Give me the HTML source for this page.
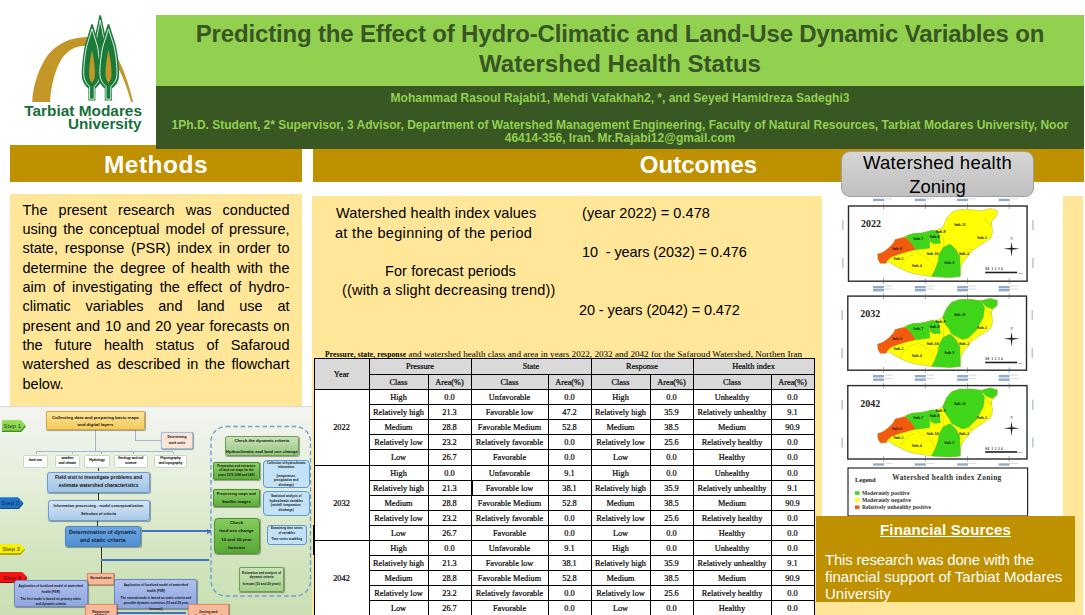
<!DOCTYPE html>
<html><head><meta charset="utf-8">
<style>
*{margin:0;padding:0;box-sizing:border-box}
html,body{width:1085px;height:615px;overflow:hidden;background:#fff}
body{position:relative;font-family:"Liberation Sans",sans-serif;color:#000}
.a{position:absolute}
.nw{white-space:nowrap}
.gold{background:#BF9000}
.cream{background:#FFE699}
.bar-t{color:#fff;font-weight:bold;font-size:24px;line-height:1}
.mth div{position:absolute;left:22.5px;width:267px;text-align:justify;text-align-last:justify;white-space:nowrap;font-size:14.5px;line-height:19px}
.mth div.l{text-align-last:left}
.tl{background:#000}
.tc{position:absolute;text-align:center;white-space:nowrap;font-family:"Liberation Serif",serif;font-size:8.3px;overflow:visible;padding-top:1px;-webkit-text-stroke:0.2px #000}
.fb{position:absolute;display:flex;align-items:center;justify-content:center;text-align:center;line-height:1.15;font-family:"Liberation Sans",sans-serif;overflow:hidden;font-weight:bold;white-space:nowrap}
.out{font-size:14.5px;line-height:1;white-space:nowrap}
</style></head><body>

<!-- Logo -->
<svg class="a" style="left:0;top:0" width="156" height="140" viewBox="0 0 156 140">
  <path d="M32.3,102 C33,82 42,60 52,50.5 C61,42 72,37.5 86,37 C100,36.5 110,44 116,55 C123,67 129,84 133,102 L131,102 C127,86 121,72 114,61 C108,51 98,46 84,46 C74,46 66,52 61,60 C55,70 51,86 50,102 Z" fill="#C39628"/>
  <g stroke-linejoin="round">
  <!-- center tree -->
  <path d="M99.3,15.8 Q100.2,14.3 101.1,15.8 L107.5,46 L100.2,68 L92.9,46 Z" fill="#1A7A3A"/>
  <path d="M100.2,19.8 L105.3,46 L100.2,62 L95.1,46 Z" fill="none" stroke="#fff" stroke-width="0.8"/>
  <path d="M100.2,47 C101.4,52 101.8,57 100.2,64 C98.6,57 99,52 100.2,47 Z" fill="#C39628"/>
  <!-- left tree -->
  <g id="lt">
  <path d="M91.2,24.6 Q92,23.2 92.8,24.6 L99,45 C101,55 102.5,68 102.2,75 C102,81 99.5,85 96,88 L95.4,88.5 L95.4,100.5 L88.4,100.5 L88.4,88.5 C84.5,85 82,81 81.8,75 C81.5,68 83,55 85,45 Z" fill="#1A7A3A"/>
  <path d="M92,28.8 L97.3,46 C99.1,55 100.4,67 100.2,74.5 C100,79.5 97.8,83 94.2,86.5 L94.2,99.2 L89.6,99.2 L89.6,86.5 C86,83 83.9,79.5 83.7,74.5 C83.5,67 84.8,55 86.7,46 Z" fill="none" stroke="#fff" stroke-width="0.85"/>
  <path d="M92,50 C93.8,58 95,67 94.9,74 C94.8,78.5 93.5,81.5 92,82.8 C90.5,81.5 89.2,78.5 89.1,74 C89,67 90.2,58 92,50 Z" fill="#C39628"/>
  </g>
  <!-- right tree -->
  <use href="#lt" transform="translate(108.5,0) scale(1.04,1) translate(-92,0)"/>
  </g>
  <text x="142" y="116.2" text-anchor="end" font-family="Liberation Sans" font-weight="bold" font-size="15.4" fill="#176F3A" letter-spacing="0">Tarbiat Modares</text>
  <text x="141.5" y="128.6" text-anchor="end" font-family="Liberation Sans" font-weight="bold" font-size="15.2" fill="#176F3A">University</text>
</svg>

<!-- Section bars -->
<div class="a gold" style="left:10px;top:145px;width:292px;height:37px"></div>
<div class="a bar-t nw" style="left:10px;top:152.5px;width:292px;text-align:center;font-size:24.5px;letter-spacing:0.5px">Methods</div>
<div class="a gold" style="left:313px;top:145px;width:771px;height:37px"></div>
<div class="a bar-t nw" style="left:313px;top:152.5px;width:771px;text-align:center">Outcomes</div>

<!-- Header -->
<div class="a" style="left:156px;top:15px;width:928px;height:71px;background:#92D050"></div>
<div class="a" style="left:156px;top:86px;width:928px;height:63px;background:#385723"></div>
<div class="a nw" style="left:156px;top:18.5px;width:928px;text-align:center;color:#375623;font-weight:bold;font-size:24px;line-height:30px;letter-spacing:-0.16px">Predicting the Effect of Hydro-Climatic and Land-Use Dynamic Variables on<br><span style="letter-spacing:0">Watershed Health Status</span></div>
<div class="a nw" style="left:156px;top:91px;width:928px;text-align:center;color:#92D050;font-weight:bold;font-size:12px;line-height:14px">Mohammad Rasoul Rajabi1, Mehdi Vafakhah2, *, and Seyed Hamidreza Sadeghi3</div>
<div class="a nw" style="left:156px;top:119px;width:928px;text-align:center;color:#92D050;font-weight:bold;font-size:12px;line-height:13px">1Ph.D. Student, 2* Supervisor, 3 Advisor, Department of Watershed Management Engineering, Faculty of Natural Resources, Tarbiat Modares University, Noor<br>46414-356, Iran. Mr.Rajabi12@gmail.com</div>

<!-- Methods content -->
<div class="a cream" style="left:10px;top:194px;width:292px;height:212px"></div>
<div class="a mth" style="left:0;top:0">
  <div style="top:200.5px">The present research was conducted</div>
  <div style="top:219.85px">using the conceptual model of pressure,</div>
  <div style="top:239.2px">state, response (PSR) index in order to</div>
  <div style="top:258.55px">determine the degree of health with the</div>
  <div style="top:277.9px">aim of investigating the effect of hydro-</div>
  <div style="top:297.25px">climatic variables and land use at</div>
  <div style="top:316.6px">present and 10 and 20 year forecasts on</div>
  <div style="top:335.95px">the future health status of Safaroud</div>
  <div style="top:355.3px">watershed as described in the flowchart</div>
  <div class="l" style="top:374.65px">below.</div>
</div>

<!-- Outcomes content -->
<div class="a cream" style="left:312px;top:196px;width:510px;height:419px"></div>
<div class="a cream" style="left:816px;top:196px;width:267px;height:419px"></div>
<div class="a" style="left:822px;top:196px;width:241px;height:320px;background:#fff"></div>

<div class="a out" style="left:336px;top:206px;letter-spacing:0.09px">Watershed health index values</div>
<div class="a out" style="left:335px;top:226px;letter-spacing:0.31px">at the beginning of the period</div>
<div class="a out" style="left:385px;top:264px;letter-spacing:0.1px">For forecast periods</div>
<div class="a out" style="left:342px;top:283px;letter-spacing:0.19px">((with a slight decreasing trend))</div>
<div class="a out" style="left:582px;top:206px;letter-spacing:0.05px">(year 2022) = 0.478</div>
<div class="a out" style="left:582px;top:245px;letter-spacing:-0.1px">10&nbsp; - years (2032) = 0.476</div>
<div class="a out" style="left:579px;top:303px;letter-spacing:-0.1px">20 - years (2042) = 0.472</div>

<!-- Table -->
<div class="a nw" style="left:325px;top:349px;font-family:'Liberation Serif',serif;font-size:9.15px;line-height:10px"><span style="font-weight:bold;font-size:7.5px;letter-spacing:0.13px">Pressure, state, response</span> and watershed health class and area in years 2022, 2032 and 2042 for the Safaroud Watershed, Northen Iran</div>
<div class="a" style="left:314px;top:358px;width:500px;height:31px;background:#D9D9D9"></div>
<div class="a" style="left:314px;top:389px;width:500px;height:226px;background:#fff"></div>
<div class="a tl" style="left:314px;top:358px;width:501px;height:1px"></div>
<div class="a tl" style="left:369px;top:374px;width:446px;height:1px"></div>
<div class="a tl" style="left:314px;top:389px;width:501px;height:1px"></div>
<div class="a tl" style="left:369px;top:404.1px;width:446px;height:1px"></div>
<div class="a tl" style="left:369px;top:419.2px;width:446px;height:1px"></div>
<div class="a tl" style="left:369px;top:434.3px;width:446px;height:1px"></div>
<div class="a tl" style="left:369px;top:449.4px;width:446px;height:1px"></div>
<div class="a tl" style="left:314px;top:464.5px;width:501px;height:1px"></div>
<div class="a tl" style="left:369px;top:479.6px;width:446px;height:1px"></div>
<div class="a tl" style="left:369px;top:494.7px;width:446px;height:1px"></div>
<div class="a tl" style="left:369px;top:509.8px;width:446px;height:1px"></div>
<div class="a tl" style="left:369px;top:524.9px;width:446px;height:1px"></div>
<div class="a tl" style="left:314px;top:540.0px;width:501px;height:1px"></div>
<div class="a tl" style="left:369px;top:555.1px;width:446px;height:1px"></div>
<div class="a tl" style="left:369px;top:570.2px;width:446px;height:1px"></div>
<div class="a tl" style="left:369px;top:585.3px;width:446px;height:1px"></div>
<div class="a tl" style="left:369px;top:600.4px;width:446px;height:1px"></div>
<div class="a tl" style="left:314px;top:615.5px;width:501px;height:1px"></div>
<div class="a tl" style="left:314px;top:358px;width:1px;height:257px"></div>
<div class="a tl" style="left:369px;top:358px;width:1px;height:257px"></div>
<div class="a tl" style="left:471px;top:358px;width:1px;height:257px"></div>
<div class="a tl" style="left:591px;top:358px;width:1px;height:257px"></div>
<div class="a tl" style="left:693px;top:358px;width:1px;height:257px"></div>
<div class="a tl" style="left:814px;top:358px;width:1px;height:257px"></div>
<div class="a tl" style="left:428px;top:374px;width:1px;height:241px"></div>
<div class="a tl" style="left:548px;top:374px;width:1px;height:241px"></div>
<div class="a tl" style="left:650px;top:374px;width:1px;height:241px"></div>
<div class="a tl" style="left:771px;top:374px;width:1px;height:241px"></div>
<div class="a tc" style="left:314px;top:358px;width:55px;height:31px;line-height:31px">Year</div>
<div class="a tc" style="left:369px;top:358px;width:102px;height:16px;line-height:16px">Pressure</div>
<div class="a tc" style="left:369px;top:374px;width:59px;height:15px;line-height:15px">Class</div>
<div class="a tc" style="left:428px;top:374px;width:43px;height:15px;line-height:15px">Area(%)</div>
<div class="a tc" style="left:471px;top:358px;width:120px;height:16px;line-height:16px">State</div>
<div class="a tc" style="left:471px;top:374px;width:77px;height:15px;line-height:15px">Class</div>
<div class="a tc" style="left:548px;top:374px;width:43px;height:15px;line-height:15px">Area(%)</div>
<div class="a tc" style="left:591px;top:358px;width:102px;height:16px;line-height:16px">Response</div>
<div class="a tc" style="left:591px;top:374px;width:59px;height:15px;line-height:15px">Class</div>
<div class="a tc" style="left:650px;top:374px;width:43px;height:15px;line-height:15px">Area(%)</div>
<div class="a tc" style="left:693px;top:358px;width:121px;height:16px;line-height:16px">Health index</div>
<div class="a tc" style="left:693px;top:374px;width:78px;height:15px;line-height:15px">Class</div>
<div class="a tc" style="left:771px;top:374px;width:43px;height:15px;line-height:15px">Area(%)</div>
<div class="a tc" style="left:314px;top:389.0px;width:55px;height:75.5px;line-height:75.5px">2022</div>
<div class="a tc" style="left:369px;top:389.0px;width:59px;height:15.100000000000023px;line-height:15.100000000000023px">High</div>
<div class="a tc" style="left:428px;top:389.0px;width:43px;height:15.100000000000023px;line-height:15.100000000000023px">0.0</div>
<div class="a tc" style="left:471px;top:389.0px;width:77px;height:15.100000000000023px;line-height:15.100000000000023px">Unfavorable</div>
<div class="a tc" style="left:548px;top:389.0px;width:43px;height:15.100000000000023px;line-height:15.100000000000023px">0.0</div>
<div class="a tc" style="left:591px;top:389.0px;width:59px;height:15.100000000000023px;line-height:15.100000000000023px">High</div>
<div class="a tc" style="left:650px;top:389.0px;width:43px;height:15.100000000000023px;line-height:15.100000000000023px">0.0</div>
<div class="a tc" style="left:693px;top:389.0px;width:78px;height:15.100000000000023px;line-height:15.100000000000023px">Unhealthy</div>
<div class="a tc" style="left:771px;top:389.0px;width:43px;height:15.100000000000023px;line-height:15.100000000000023px">0.0</div>
<div class="a tc" style="left:369px;top:404.1px;width:59px;height:15.099999999999966px;line-height:15.099999999999966px">Relatively high</div>
<div class="a tc" style="left:428px;top:404.1px;width:43px;height:15.099999999999966px;line-height:15.099999999999966px">21.3</div>
<div class="a tc" style="left:471px;top:404.1px;width:77px;height:15.099999999999966px;line-height:15.099999999999966px">Favorable low</div>
<div class="a tc" style="left:548px;top:404.1px;width:43px;height:15.099999999999966px;line-height:15.099999999999966px">47.2</div>
<div class="a tc" style="left:591px;top:404.1px;width:59px;height:15.099999999999966px;line-height:15.099999999999966px">Relatively high</div>
<div class="a tc" style="left:650px;top:404.1px;width:43px;height:15.099999999999966px;line-height:15.099999999999966px">35.9</div>
<div class="a tc" style="left:693px;top:404.1px;width:78px;height:15.099999999999966px;line-height:15.099999999999966px">Relatively unhealthy</div>
<div class="a tc" style="left:771px;top:404.1px;width:43px;height:15.099999999999966px;line-height:15.099999999999966px">9.1</div>
<div class="a tc" style="left:369px;top:419.2px;width:59px;height:15.100000000000023px;line-height:15.100000000000023px">Medium</div>
<div class="a tc" style="left:428px;top:419.2px;width:43px;height:15.100000000000023px;line-height:15.100000000000023px">28.8</div>
<div class="a tc" style="left:471px;top:419.2px;width:77px;height:15.100000000000023px;line-height:15.100000000000023px">Favorable Medium</div>
<div class="a tc" style="left:548px;top:419.2px;width:43px;height:15.100000000000023px;line-height:15.100000000000023px">52.8</div>
<div class="a tc" style="left:591px;top:419.2px;width:59px;height:15.100000000000023px;line-height:15.100000000000023px">Medium</div>
<div class="a tc" style="left:650px;top:419.2px;width:43px;height:15.100000000000023px;line-height:15.100000000000023px">38.5</div>
<div class="a tc" style="left:693px;top:419.2px;width:78px;height:15.100000000000023px;line-height:15.100000000000023px">Medium</div>
<div class="a tc" style="left:771px;top:419.2px;width:43px;height:15.100000000000023px;line-height:15.100000000000023px">90.9</div>
<div class="a tc" style="left:369px;top:434.3px;width:59px;height:15.099999999999966px;line-height:15.099999999999966px">Relatively low</div>
<div class="a tc" style="left:428px;top:434.3px;width:43px;height:15.099999999999966px;line-height:15.099999999999966px">23.2</div>
<div class="a tc" style="left:471px;top:434.3px;width:77px;height:15.099999999999966px;line-height:15.099999999999966px">Relatively favorable</div>
<div class="a tc" style="left:548px;top:434.3px;width:43px;height:15.099999999999966px;line-height:15.099999999999966px">0.0</div>
<div class="a tc" style="left:591px;top:434.3px;width:59px;height:15.099999999999966px;line-height:15.099999999999966px">Relatively low</div>
<div class="a tc" style="left:650px;top:434.3px;width:43px;height:15.099999999999966px;line-height:15.099999999999966px">25.6</div>
<div class="a tc" style="left:693px;top:434.3px;width:78px;height:15.099999999999966px;line-height:15.099999999999966px">Relatively healthy</div>
<div class="a tc" style="left:771px;top:434.3px;width:43px;height:15.099999999999966px;line-height:15.099999999999966px">0.0</div>
<div class="a tc" style="left:369px;top:449.4px;width:59px;height:15.100000000000023px;line-height:15.100000000000023px">Low</div>
<div class="a tc" style="left:428px;top:449.4px;width:43px;height:15.100000000000023px;line-height:15.100000000000023px">26.7</div>
<div class="a tc" style="left:471px;top:449.4px;width:77px;height:15.100000000000023px;line-height:15.100000000000023px">Favorable</div>
<div class="a tc" style="left:548px;top:449.4px;width:43px;height:15.100000000000023px;line-height:15.100000000000023px">0.0</div>
<div class="a tc" style="left:591px;top:449.4px;width:59px;height:15.100000000000023px;line-height:15.100000000000023px">Low</div>
<div class="a tc" style="left:650px;top:449.4px;width:43px;height:15.100000000000023px;line-height:15.100000000000023px">0.0</div>
<div class="a tc" style="left:693px;top:449.4px;width:78px;height:15.100000000000023px;line-height:15.100000000000023px">Healthy</div>
<div class="a tc" style="left:771px;top:449.4px;width:43px;height:15.100000000000023px;line-height:15.100000000000023px">0.0</div>
<div class="a tc" style="left:314px;top:464.5px;width:55px;height:75.5px;line-height:75.5px">2032</div>
<div class="a tc" style="left:369px;top:464.5px;width:59px;height:15.100000000000023px;line-height:15.100000000000023px">High</div>
<div class="a tc" style="left:428px;top:464.5px;width:43px;height:15.100000000000023px;line-height:15.100000000000023px">0.0</div>
<div class="a tc" style="left:471px;top:464.5px;width:77px;height:15.100000000000023px;line-height:15.100000000000023px">Unfavorable</div>
<div class="a tc" style="left:548px;top:464.5px;width:43px;height:15.100000000000023px;line-height:15.100000000000023px">9.1</div>
<div class="a tc" style="left:591px;top:464.5px;width:59px;height:15.100000000000023px;line-height:15.100000000000023px">High</div>
<div class="a tc" style="left:650px;top:464.5px;width:43px;height:15.100000000000023px;line-height:15.100000000000023px">0.0</div>
<div class="a tc" style="left:693px;top:464.5px;width:78px;height:15.100000000000023px;line-height:15.100000000000023px">Unhealthy</div>
<div class="a tc" style="left:771px;top:464.5px;width:43px;height:15.100000000000023px;line-height:15.100000000000023px">0.0</div>
<div class="a tc" style="left:369px;top:479.6px;width:59px;height:15.099999999999966px;line-height:15.099999999999966px">Relatively high</div>
<div class="a tc" style="left:428px;top:479.6px;width:43px;height:15.099999999999966px;line-height:15.099999999999966px">21.3</div>
<div class="a tc" style="left:471px;top:479.6px;width:77px;height:15.099999999999966px;line-height:15.099999999999966px">Favorable low</div>
<div class="a tc" style="left:548px;top:479.6px;width:43px;height:15.099999999999966px;line-height:15.099999999999966px">38.1</div>
<div class="a tc" style="left:591px;top:479.6px;width:59px;height:15.099999999999966px;line-height:15.099999999999966px">Relatively high</div>
<div class="a tc" style="left:650px;top:479.6px;width:43px;height:15.099999999999966px;line-height:15.099999999999966px">35.9</div>
<div class="a tc" style="left:693px;top:479.6px;width:78px;height:15.099999999999966px;line-height:15.099999999999966px">Relatively unhealthy</div>
<div class="a tc" style="left:771px;top:479.6px;width:43px;height:15.099999999999966px;line-height:15.099999999999966px">9.1</div>
<div class="a tc" style="left:369px;top:494.7px;width:59px;height:15.100000000000023px;line-height:15.100000000000023px">Medium</div>
<div class="a tc" style="left:428px;top:494.7px;width:43px;height:15.100000000000023px;line-height:15.100000000000023px">28.8</div>
<div class="a tc" style="left:471px;top:494.7px;width:77px;height:15.100000000000023px;line-height:15.100000000000023px">Favorable Medium</div>
<div class="a tc" style="left:548px;top:494.7px;width:43px;height:15.100000000000023px;line-height:15.100000000000023px">52.8</div>
<div class="a tc" style="left:591px;top:494.7px;width:59px;height:15.100000000000023px;line-height:15.100000000000023px">Medium</div>
<div class="a tc" style="left:650px;top:494.7px;width:43px;height:15.100000000000023px;line-height:15.100000000000023px">38.5</div>
<div class="a tc" style="left:693px;top:494.7px;width:78px;height:15.100000000000023px;line-height:15.100000000000023px">Medium</div>
<div class="a tc" style="left:771px;top:494.7px;width:43px;height:15.100000000000023px;line-height:15.100000000000023px">90.9</div>
<div class="a tc" style="left:369px;top:509.8px;width:59px;height:15.099999999999966px;line-height:15.099999999999966px">Relatively low</div>
<div class="a tc" style="left:428px;top:509.8px;width:43px;height:15.099999999999966px;line-height:15.099999999999966px">23.2</div>
<div class="a tc" style="left:471px;top:509.8px;width:77px;height:15.099999999999966px;line-height:15.099999999999966px">Relatively favorable</div>
<div class="a tc" style="left:548px;top:509.8px;width:43px;height:15.099999999999966px;line-height:15.099999999999966px">0.0</div>
<div class="a tc" style="left:591px;top:509.8px;width:59px;height:15.099999999999966px;line-height:15.099999999999966px">Relatively low</div>
<div class="a tc" style="left:650px;top:509.8px;width:43px;height:15.099999999999966px;line-height:15.099999999999966px">25.6</div>
<div class="a tc" style="left:693px;top:509.8px;width:78px;height:15.099999999999966px;line-height:15.099999999999966px">Relatively healthy</div>
<div class="a tc" style="left:771px;top:509.8px;width:43px;height:15.099999999999966px;line-height:15.099999999999966px">0.0</div>
<div class="a tc" style="left:369px;top:524.9px;width:59px;height:15.100000000000023px;line-height:15.100000000000023px">Low</div>
<div class="a tc" style="left:428px;top:524.9px;width:43px;height:15.100000000000023px;line-height:15.100000000000023px">26.7</div>
<div class="a tc" style="left:471px;top:524.9px;width:77px;height:15.100000000000023px;line-height:15.100000000000023px">Favorable</div>
<div class="a tc" style="left:548px;top:524.9px;width:43px;height:15.100000000000023px;line-height:15.100000000000023px">0.0</div>
<div class="a tc" style="left:591px;top:524.9px;width:59px;height:15.100000000000023px;line-height:15.100000000000023px">Low</div>
<div class="a tc" style="left:650px;top:524.9px;width:43px;height:15.100000000000023px;line-height:15.100000000000023px">0.0</div>
<div class="a tc" style="left:693px;top:524.9px;width:78px;height:15.100000000000023px;line-height:15.100000000000023px">Healthy</div>
<div class="a tc" style="left:771px;top:524.9px;width:43px;height:15.100000000000023px;line-height:15.100000000000023px">0.0</div>
<div class="a tc" style="left:314px;top:540.0px;width:55px;height:75.5px;line-height:75.5px">2042</div>
<div class="a tc" style="left:369px;top:540.0px;width:59px;height:15.100000000000023px;line-height:15.100000000000023px">High</div>
<div class="a tc" style="left:428px;top:540.0px;width:43px;height:15.100000000000023px;line-height:15.100000000000023px">0.0</div>
<div class="a tc" style="left:471px;top:540.0px;width:77px;height:15.100000000000023px;line-height:15.100000000000023px">Unfavorable</div>
<div class="a tc" style="left:548px;top:540.0px;width:43px;height:15.100000000000023px;line-height:15.100000000000023px">9.1</div>
<div class="a tc" style="left:591px;top:540.0px;width:59px;height:15.100000000000023px;line-height:15.100000000000023px">High</div>
<div class="a tc" style="left:650px;top:540.0px;width:43px;height:15.100000000000023px;line-height:15.100000000000023px">0.0</div>
<div class="a tc" style="left:693px;top:540.0px;width:78px;height:15.100000000000023px;line-height:15.100000000000023px">Unhealthy</div>
<div class="a tc" style="left:771px;top:540.0px;width:43px;height:15.100000000000023px;line-height:15.100000000000023px">0.0</div>
<div class="a tc" style="left:369px;top:555.1px;width:59px;height:15.100000000000023px;line-height:15.100000000000023px">Relatively high</div>
<div class="a tc" style="left:428px;top:555.1px;width:43px;height:15.100000000000023px;line-height:15.100000000000023px">21.3</div>
<div class="a tc" style="left:471px;top:555.1px;width:77px;height:15.100000000000023px;line-height:15.100000000000023px">Favorable low</div>
<div class="a tc" style="left:548px;top:555.1px;width:43px;height:15.100000000000023px;line-height:15.100000000000023px">38.1</div>
<div class="a tc" style="left:591px;top:555.1px;width:59px;height:15.100000000000023px;line-height:15.100000000000023px">Relatively high</div>
<div class="a tc" style="left:650px;top:555.1px;width:43px;height:15.100000000000023px;line-height:15.100000000000023px">35.9</div>
<div class="a tc" style="left:693px;top:555.1px;width:78px;height:15.100000000000023px;line-height:15.100000000000023px">Relatively unhealthy</div>
<div class="a tc" style="left:771px;top:555.1px;width:43px;height:15.100000000000023px;line-height:15.100000000000023px">9.1</div>
<div class="a tc" style="left:369px;top:570.2px;width:59px;height:15.099999999999909px;line-height:15.099999999999909px">Medium</div>
<div class="a tc" style="left:428px;top:570.2px;width:43px;height:15.099999999999909px;line-height:15.099999999999909px">28.8</div>
<div class="a tc" style="left:471px;top:570.2px;width:77px;height:15.099999999999909px;line-height:15.099999999999909px">Favorable Medium</div>
<div class="a tc" style="left:548px;top:570.2px;width:43px;height:15.099999999999909px;line-height:15.099999999999909px">52.8</div>
<div class="a tc" style="left:591px;top:570.2px;width:59px;height:15.099999999999909px;line-height:15.099999999999909px">Medium</div>
<div class="a tc" style="left:650px;top:570.2px;width:43px;height:15.099999999999909px;line-height:15.099999999999909px">38.5</div>
<div class="a tc" style="left:693px;top:570.2px;width:78px;height:15.099999999999909px;line-height:15.099999999999909px">Medium</div>
<div class="a tc" style="left:771px;top:570.2px;width:43px;height:15.099999999999909px;line-height:15.099999999999909px">90.9</div>
<div class="a tc" style="left:369px;top:585.3px;width:59px;height:15.100000000000023px;line-height:15.100000000000023px">Relatively low</div>
<div class="a tc" style="left:428px;top:585.3px;width:43px;height:15.100000000000023px;line-height:15.100000000000023px">23.2</div>
<div class="a tc" style="left:471px;top:585.3px;width:77px;height:15.100000000000023px;line-height:15.100000000000023px">Relatively favorable</div>
<div class="a tc" style="left:548px;top:585.3px;width:43px;height:15.100000000000023px;line-height:15.100000000000023px">0.0</div>
<div class="a tc" style="left:591px;top:585.3px;width:59px;height:15.100000000000023px;line-height:15.100000000000023px">Relatively low</div>
<div class="a tc" style="left:650px;top:585.3px;width:43px;height:15.100000000000023px;line-height:15.100000000000023px">25.6</div>
<div class="a tc" style="left:693px;top:585.3px;width:78px;height:15.100000000000023px;line-height:15.100000000000023px">Relatively healthy</div>
<div class="a tc" style="left:771px;top:585.3px;width:43px;height:15.100000000000023px;line-height:15.100000000000023px">0.0</div>
<div class="a tc" style="left:369px;top:600.4px;width:59px;height:15.100000000000023px;line-height:15.100000000000023px">Low</div>
<div class="a tc" style="left:428px;top:600.4px;width:43px;height:15.100000000000023px;line-height:15.100000000000023px">26.7</div>
<div class="a tc" style="left:471px;top:600.4px;width:77px;height:15.100000000000023px;line-height:15.100000000000023px">Favorable</div>
<div class="a tc" style="left:548px;top:600.4px;width:43px;height:15.100000000000023px;line-height:15.100000000000023px">0.0</div>
<div class="a tc" style="left:591px;top:600.4px;width:59px;height:15.100000000000023px;line-height:15.100000000000023px">Low</div>
<div class="a tc" style="left:650px;top:600.4px;width:43px;height:15.100000000000023px;line-height:15.100000000000023px">0.0</div>
<div class="a tc" style="left:693px;top:600.4px;width:78px;height:15.100000000000023px;line-height:15.100000000000023px">Healthy</div>
<div class="a tc" style="left:771px;top:600.4px;width:43px;height:15.100000000000023px;line-height:15.100000000000023px">0.0</div>
<div class="a tl" style="left:313px;top:525px;width:2px;height:30px"></div>
<div class="a tl" style="left:471px;top:480px;width:2px;height:15px"></div>
<svg class="a" style="left:0;top:0" width="1085" height="615" viewBox="0 0 1085 615">
<rect x="848.5" y="206" width="178.6" height="75.2" fill="#fff" stroke="#2a2a2a" stroke-width="1.4"/>
<polygon points="877.7,254.2 883.1,252.2 888.8,248.1 893.3,243.3 895.3,239.6 901.4,238.0 906.7,235.6 913.2,233.5 921.3,233.1 926.3,231.9 931.4,230.5 937.5,229.9 942.6,227.5 946.6,218.3 951.7,212.2 959.8,209.6 972.0,209.6 981.1,210.8 990.2,208.4 997.3,210.4 997.1,215.3 991.3,221.8 992.7,231.5 990.6,238.6 982.1,244.1 973.0,250.2 968.3,255.9 964.3,260.3 961.0,266.4 960.2,276.5 949.7,277.4 931.4,276.5 923.3,275.3 915.2,274.1 907.1,271.7 900.0,268.4 893.9,265.2 889.2,261.9 885.8,263.2 880.3,263.2 878.1,259.5" fill="#FFFF00" stroke="#9a9a60" stroke-width="0.4"/>
<polygon points="877.7,254.2 883.1,252.2 888.8,248.1 893.3,243.3 895.3,239.6 901.4,238.0 905.5,237.2 910.7,242.1 913.6,246.1 915.6,249.8 910.1,251.0 903.0,253.0 896.9,255.0 891.3,257.1 887.6,260.3 885.8,263.2 880.3,263.2 878.1,259.5" fill="#F25A10" stroke="#a08050" stroke-width="0.3"/>
<polygon points="905.5,237.2 907.1,235.6 913.2,233.5 921.3,233.1 926.3,231.9 929.4,234.8 929.8,248.1 923.3,249.0 915.6,249.8 913.6,246.1 910.7,242.1" fill="#3FD61A" stroke="#70a050" stroke-width="0.3"/>
<polygon points="926.3,231.9 931.4,230.5 937.5,231.1 939.5,234.8 940.5,243.3 934.5,244.1 930.4,242.1 929.4,234.8" fill="#3FD61A" stroke="#70a050" stroke-width="0.3"/>
<polygon points="939.1,254.2 943.2,247.3 950.1,244.1 956.2,249.8 959.8,256.3 960.2,266.4 960.2,276.5 949.7,277.4 931.4,276.5 935.5,268.4 938.3,260.3" fill="#3FD61A" stroke="#70a050" stroke-width="0.3"/>
<polyline points="915.2,249.8 919.2,253.8 923.3,255.9 931.4,261.9 935.5,268.4" fill="none" stroke="#b0b070" stroke-width="0.4"/>
<polyline points="900.0,268.4 903.0,261.9 910.1,255.9 915.2,253.8" fill="none" stroke="#b0b070" stroke-width="0.4"/>
<polyline points="943.6,246.7 943.6,237.6 940.5,234.8" fill="none" stroke="#b0b070" stroke-width="0.4"/>
<polyline points="951.7,244.1 959.8,256.3" fill="none" stroke="#b0b070" stroke-width="0.4"/>
<polyline points="968.3,248.1 972.0,250.2" fill="none" stroke="#b0b070" stroke-width="0.4"/>
<polyline points="984.6,217.7 990.2,225.4 991.3,221.8" fill="none" stroke="#b0b070" stroke-width="0.4"/>
<text x="896.9" y="250.2" font-size="4" font-family="Liberation Serif" font-weight="bold" fill="#111" text-anchor="middle">Sub-6</text>
<text x="898.6" y="259.9" font-size="4" font-family="Liberation Serif" font-weight="bold" fill="#111" text-anchor="middle">Sub-5</text>
<text x="916.8" y="267.0" font-size="4" font-family="Liberation Serif" font-weight="bold" fill="#111" text-anchor="middle">Sub-4</text>
<text x="932.4" y="255.4" font-size="4" font-family="Liberation Serif" font-weight="bold" fill="#111" text-anchor="middle">Sub-10</text>
<text x="949.3" y="264.0" font-size="4" font-family="Liberation Serif" font-weight="bold" fill="#111" text-anchor="middle">Sub-3</text>
<text x="963.9" y="255.4" font-size="4" font-family="Liberation Serif" font-weight="bold" fill="#111" text-anchor="middle">Sub-2</text>
<text x="918.2" y="239.6" font-size="4" font-family="Liberation Serif" font-weight="bold" fill="#111" text-anchor="middle">Sub-7</text>
<text x="934.5" y="237.6" font-size="4" font-family="Liberation Serif" font-weight="bold" fill="#111" text-anchor="middle">Sub-8</text>
<text x="940.5" y="232.5" font-size="4" font-family="Liberation Serif" font-weight="bold" fill="#111" text-anchor="middle">Sub-9</text>
<text x="959.8" y="225.8" font-size="4" font-family="Liberation Serif" font-weight="bold" fill="#111" text-anchor="middle">Sub-11</text>
<text x="982.1" y="239.2" font-size="4" font-family="Liberation Serif" font-weight="bold" fill="#111" text-anchor="middle">Sub-1</text>
<text x="861.0" y="227" font-size="10" font-family="Liberation Serif" font-weight="bold" fill="#222">2022</text>
<path d="M1003.5415821501015,248.75253549695742 L1011.5415821501015,247.75253549695742 L1019.5415821501015,248.75253549695742 L1011.5415821501015,249.75253549695742 Z M1011.5415821501015,241.75253549695742 L1012.5415821501015,248.75253549695742 L1011.5415821501015,256.7525354969574 L1010.5415821501015,248.75253549695742 Z" fill="#222"/>
<text x="1010.5415821501015" y="239.75253549695742" font-size="3" font-family="Liberation Serif" fill="#222">N</text>
<rect x="985.1724137931035" y="271.6734279918864" width="32" height="1.6" fill="#222"/>
<text x="985.1724137931035" y="270.1734279918864" font-size="3.2" font-family="Liberation Serif" font-weight="bold" fill="#222">0.8 &#160; 1 &#160;2 &#160;3 &#160;4</text>
<text x="1018.1724137931035" y="273.6734279918864" font-size="2.5" font-family="Liberation Serif" fill="#222">Km</text>
<line x1="883.5" y1="206" x2="883.5" y2="203.5" stroke="#555" stroke-width="0.5"/>
<line x1="883.5" y1="281.2" x2="883.5" y2="283.7" stroke="#555" stroke-width="0.5"/>
<line x1="883.5" y1="209" x2="883.5" y2="206" stroke="#555" stroke-width="0.5"/>
<line x1="883.5" y1="278.2" x2="883.5" y2="281.2" stroke="#555" stroke-width="0.5"/>
<rect x="873.0" y="198.7" width="11" height="2.4" fill="#6D8FB5" opacity="0.75"/>
<rect x="884.5" y="198.2" width="8" height="1.2" fill="#c8c8c8" opacity="0.6"/>
<rect x="873.0" y="286" width="11" height="2.4" fill="#6D8FB5" opacity="0.75"/>
<rect x="884.5" y="285.5" width="8" height="1.2" fill="#c8c8c8" opacity="0.6"/>
<rect x="873.0" y="289" width="11" height="2.4" fill="#6D8FB5" opacity="0.75"/>
<rect x="884.5" y="288.5" width="8" height="1.2" fill="#c8c8c8" opacity="0.6"/>
<line x1="925.3" y1="206" x2="925.3" y2="203.5" stroke="#555" stroke-width="0.5"/>
<line x1="925.3" y1="281.2" x2="925.3" y2="283.7" stroke="#555" stroke-width="0.5"/>
<line x1="925.3" y1="209" x2="925.3" y2="206" stroke="#555" stroke-width="0.5"/>
<line x1="925.3" y1="278.2" x2="925.3" y2="281.2" stroke="#555" stroke-width="0.5"/>
<rect x="914.8" y="198.7" width="11" height="2.4" fill="#6D8FB5" opacity="0.75"/>
<rect x="926.3" y="198.2" width="8" height="1.2" fill="#c8c8c8" opacity="0.6"/>
<rect x="914.8" y="286" width="11" height="2.4" fill="#6D8FB5" opacity="0.75"/>
<rect x="926.3" y="285.5" width="8" height="1.2" fill="#c8c8c8" opacity="0.6"/>
<rect x="914.8" y="289" width="11" height="2.4" fill="#6D8FB5" opacity="0.75"/>
<rect x="926.3" y="288.5" width="8" height="1.2" fill="#c8c8c8" opacity="0.6"/>
<line x1="967.6" y1="206" x2="967.6" y2="203.5" stroke="#555" stroke-width="0.5"/>
<line x1="967.6" y1="281.2" x2="967.6" y2="283.7" stroke="#555" stroke-width="0.5"/>
<line x1="967.6" y1="209" x2="967.6" y2="206" stroke="#555" stroke-width="0.5"/>
<line x1="967.6" y1="278.2" x2="967.6" y2="281.2" stroke="#555" stroke-width="0.5"/>
<rect x="957.1" y="198.7" width="11" height="2.4" fill="#6D8FB5" opacity="0.75"/>
<rect x="968.6" y="198.2" width="8" height="1.2" fill="#c8c8c8" opacity="0.6"/>
<rect x="957.1" y="286" width="11" height="2.4" fill="#6D8FB5" opacity="0.75"/>
<rect x="968.6" y="285.5" width="8" height="1.2" fill="#c8c8c8" opacity="0.6"/>
<rect x="957.1" y="289" width="11" height="2.4" fill="#6D8FB5" opacity="0.75"/>
<rect x="968.6" y="288.5" width="8" height="1.2" fill="#c8c8c8" opacity="0.6"/>
<line x1="1009.2" y1="206" x2="1009.2" y2="203.5" stroke="#555" stroke-width="0.5"/>
<line x1="1009.2" y1="281.2" x2="1009.2" y2="283.7" stroke="#555" stroke-width="0.5"/>
<line x1="1009.2" y1="209" x2="1009.2" y2="206" stroke="#555" stroke-width="0.5"/>
<line x1="1009.2" y1="278.2" x2="1009.2" y2="281.2" stroke="#555" stroke-width="0.5"/>
<rect x="998.7" y="198.7" width="11" height="2.4" fill="#6D8FB5" opacity="0.75"/>
<rect x="1010.2" y="198.2" width="8" height="1.2" fill="#c8c8c8" opacity="0.6"/>
<rect x="998.7" y="286" width="11" height="2.4" fill="#6D8FB5" opacity="0.75"/>
<rect x="1010.2" y="285.5" width="8" height="1.2" fill="#c8c8c8" opacity="0.6"/>
<rect x="998.7" y="289" width="11" height="2.4" fill="#6D8FB5" opacity="0.75"/>
<rect x="1010.2" y="288.5" width="8" height="1.2" fill="#c8c8c8" opacity="0.6"/>
<rect x="842.0" y="220" width="1.6" height="10" fill="#7D9CC0" opacity="0.55"/>
<rect x="1032.1" y="220" width="1.6" height="10" fill="#7D9CC0" opacity="0.55"/>
<rect x="842.0" y="258" width="1.6" height="10" fill="#7D9CC0" opacity="0.55"/>
<rect x="1032.1" y="258" width="1.6" height="10" fill="#7D9CC0" opacity="0.55"/>
<rect x="847.8" y="296.1" width="178.7" height="74.1" fill="#fff" stroke="#2a2a2a" stroke-width="1.4"/>
<polygon points="877.7,344.2 883.1,342.2 888.8,338.1 893.3,333.3 895.3,329.6 901.4,328.0 906.7,325.6 913.2,323.5 921.3,323.1 926.3,321.9 931.4,320.5 937.5,319.9 942.6,317.5 946.6,308.3 951.7,302.2 959.8,299.6 972.0,299.6 981.1,300.8 990.2,298.4 997.3,300.4 997.1,305.3 991.3,311.8 992.7,321.5 990.6,328.6 982.1,334.1 973.0,340.2 968.3,345.9 964.3,350.3 961.0,356.4 960.2,366.5 949.7,367.4 931.4,366.5 923.3,365.3 915.2,364.1 907.1,361.7 900.0,358.4 893.9,355.2 889.2,351.9 885.8,353.2 880.3,353.2 878.1,349.5" fill="#FFFF00" stroke="#9a9a60" stroke-width="0.4"/>
<polygon points="877.7,344.2 883.1,342.2 888.8,338.1 893.3,333.3 895.3,329.6 901.4,328.0 905.5,327.2 910.7,332.1 913.6,336.1 915.6,339.8 910.1,341.0 903.0,343.0 896.9,345.0 891.3,347.1 887.6,350.3 885.8,353.2 880.3,353.2 878.1,349.5" fill="#F25A10" stroke="#a08050" stroke-width="0.3"/>
<polygon points="905.5,327.2 907.1,325.6 913.2,323.5 921.3,323.1 926.3,321.9 929.4,324.8 929.8,338.1 923.3,339.0 915.6,339.8 913.6,336.1 910.7,332.1" fill="#3FD61A" stroke="#70a050" stroke-width="0.3"/>
<polygon points="926.3,321.9 931.4,320.5 937.5,321.1 939.5,324.8 940.5,333.3 934.5,334.1 930.4,332.1 929.4,324.8" fill="#3FD61A" stroke="#70a050" stroke-width="0.3"/>
<polygon points="939.1,344.2 943.2,337.3 950.1,334.1 956.2,339.8 959.8,346.3 960.2,356.4 960.2,366.5 949.7,367.4 931.4,366.5 935.5,358.4 938.3,350.3" fill="#3FD61A" stroke="#70a050" stroke-width="0.3"/>
<polygon points="942.6,317.5 946.6,308.3 951.7,302.2 959.8,299.6 972.0,299.6 981.1,300.8 984.6,307.7 983.3,317.5 976.5,330.0 968.3,338.1 962.3,339.4 951.7,334.1 948.7,328.6 945.6,324.6" fill="#3FD61A" stroke="#70a050" stroke-width="0.3"/>
<polygon points="981.1,300.8 990.2,298.4 997.3,300.4 997.1,305.3 992.3,308.9 985.8,306.5" fill="#3FD61A" stroke="#70a050" stroke-width="0.3"/>
<polyline points="915.2,339.8 919.2,343.8 923.3,345.9 931.4,351.9 935.5,358.4" fill="none" stroke="#b0b070" stroke-width="0.4"/>
<polyline points="900.0,358.4 903.0,351.9 910.1,345.9 915.2,343.8" fill="none" stroke="#b0b070" stroke-width="0.4"/>
<polyline points="943.6,336.7 943.6,327.6 940.5,324.8" fill="none" stroke="#b0b070" stroke-width="0.4"/>
<polyline points="951.7,334.1 959.8,346.3" fill="none" stroke="#b0b070" stroke-width="0.4"/>
<polyline points="968.3,338.1 972.0,340.2" fill="none" stroke="#b0b070" stroke-width="0.4"/>
<polyline points="984.6,307.7 990.2,315.4 991.3,311.8" fill="none" stroke="#b0b070" stroke-width="0.4"/>
<text x="896.9" y="340.2" font-size="4" font-family="Liberation Serif" font-weight="bold" fill="#111" text-anchor="middle">Sub-6</text>
<text x="898.6" y="349.9" font-size="4" font-family="Liberation Serif" font-weight="bold" fill="#111" text-anchor="middle">Sub-5</text>
<text x="916.8" y="357.0" font-size="4" font-family="Liberation Serif" font-weight="bold" fill="#111" text-anchor="middle">Sub-4</text>
<text x="932.4" y="345.4" font-size="4" font-family="Liberation Serif" font-weight="bold" fill="#111" text-anchor="middle">Sub-10</text>
<text x="949.3" y="354.0" font-size="4" font-family="Liberation Serif" font-weight="bold" fill="#111" text-anchor="middle">Sub-3</text>
<text x="963.9" y="345.4" font-size="4" font-family="Liberation Serif" font-weight="bold" fill="#111" text-anchor="middle">Sub-2</text>
<text x="918.2" y="329.6" font-size="4" font-family="Liberation Serif" font-weight="bold" fill="#111" text-anchor="middle">Sub-7</text>
<text x="934.5" y="327.6" font-size="4" font-family="Liberation Serif" font-weight="bold" fill="#111" text-anchor="middle">Sub-8</text>
<text x="940.5" y="322.5" font-size="4" font-family="Liberation Serif" font-weight="bold" fill="#111" text-anchor="middle">Sub-9</text>
<text x="959.8" y="315.8" font-size="4" font-family="Liberation Serif" font-weight="bold" fill="#111" text-anchor="middle">Sub-11</text>
<text x="982.1" y="329.2" font-size="4" font-family="Liberation Serif" font-weight="bold" fill="#111" text-anchor="middle">Sub-1</text>
<text x="860.3" y="317.1" font-size="10" font-family="Liberation Serif" font-weight="bold" fill="#222">2032</text>
<path d="M1003.5415821501015,338.7525354969574 L1011.5415821501015,337.7525354969574 L1019.5415821501015,338.7525354969574 L1011.5415821501015,339.7525354969574 Z M1011.5415821501015,331.7525354969574 L1012.5415821501015,338.7525354969574 L1011.5415821501015,346.7525354969574 L1010.5415821501015,338.7525354969574 Z" fill="#222"/>
<text x="1010.5415821501015" y="329.7525354969574" font-size="3" font-family="Liberation Serif" fill="#222">N</text>
<rect x="985.1724137931035" y="361.6734279918864" width="32" height="1.6" fill="#222"/>
<text x="985.1724137931035" y="360.1734279918864" font-size="3.2" font-family="Liberation Serif" font-weight="bold" fill="#222">0.8 &#160; 1 &#160;2 &#160;3 &#160;4</text>
<text x="1018.1724137931035" y="363.6734279918864" font-size="2.5" font-family="Liberation Serif" fill="#222">Km</text>
<line x1="883.5" y1="296.1" x2="883.5" y2="293.6" stroke="#555" stroke-width="0.5"/>
<line x1="883.5" y1="370.20000000000005" x2="883.5" y2="372.70000000000005" stroke="#555" stroke-width="0.5"/>
<line x1="883.5" y1="299.1" x2="883.5" y2="296.1" stroke="#555" stroke-width="0.5"/>
<line x1="883.5" y1="367.20000000000005" x2="883.5" y2="370.20000000000005" stroke="#555" stroke-width="0.5"/>
<rect x="873.0" y="375.0" width="11" height="2.4" fill="#6D8FB5" opacity="0.75"/>
<rect x="884.5" y="374.5" width="8" height="1.2" fill="#c8c8c8" opacity="0.6"/>
<rect x="873.0" y="378.5" width="11" height="2.4" fill="#6D8FB5" opacity="0.75"/>
<rect x="884.5" y="378.0" width="8" height="1.2" fill="#c8c8c8" opacity="0.6"/>
<line x1="925.3" y1="296.1" x2="925.3" y2="293.6" stroke="#555" stroke-width="0.5"/>
<line x1="925.3" y1="370.20000000000005" x2="925.3" y2="372.70000000000005" stroke="#555" stroke-width="0.5"/>
<line x1="925.3" y1="299.1" x2="925.3" y2="296.1" stroke="#555" stroke-width="0.5"/>
<line x1="925.3" y1="367.20000000000005" x2="925.3" y2="370.20000000000005" stroke="#555" stroke-width="0.5"/>
<rect x="914.8" y="375.0" width="11" height="2.4" fill="#6D8FB5" opacity="0.75"/>
<rect x="926.3" y="374.5" width="8" height="1.2" fill="#c8c8c8" opacity="0.6"/>
<rect x="914.8" y="378.5" width="11" height="2.4" fill="#6D8FB5" opacity="0.75"/>
<rect x="926.3" y="378.0" width="8" height="1.2" fill="#c8c8c8" opacity="0.6"/>
<line x1="967.6" y1="296.1" x2="967.6" y2="293.6" stroke="#555" stroke-width="0.5"/>
<line x1="967.6" y1="370.20000000000005" x2="967.6" y2="372.70000000000005" stroke="#555" stroke-width="0.5"/>
<line x1="967.6" y1="299.1" x2="967.6" y2="296.1" stroke="#555" stroke-width="0.5"/>
<line x1="967.6" y1="367.20000000000005" x2="967.6" y2="370.20000000000005" stroke="#555" stroke-width="0.5"/>
<rect x="957.1" y="375.0" width="11" height="2.4" fill="#6D8FB5" opacity="0.75"/>
<rect x="968.6" y="374.5" width="8" height="1.2" fill="#c8c8c8" opacity="0.6"/>
<rect x="957.1" y="378.5" width="11" height="2.4" fill="#6D8FB5" opacity="0.75"/>
<rect x="968.6" y="378.0" width="8" height="1.2" fill="#c8c8c8" opacity="0.6"/>
<line x1="1009.2" y1="296.1" x2="1009.2" y2="293.6" stroke="#555" stroke-width="0.5"/>
<line x1="1009.2" y1="370.20000000000005" x2="1009.2" y2="372.70000000000005" stroke="#555" stroke-width="0.5"/>
<line x1="1009.2" y1="299.1" x2="1009.2" y2="296.1" stroke="#555" stroke-width="0.5"/>
<line x1="1009.2" y1="367.20000000000005" x2="1009.2" y2="370.20000000000005" stroke="#555" stroke-width="0.5"/>
<rect x="998.7" y="375.0" width="11" height="2.4" fill="#6D8FB5" opacity="0.75"/>
<rect x="1010.2" y="374.5" width="8" height="1.2" fill="#c8c8c8" opacity="0.6"/>
<rect x="998.7" y="378.5" width="11" height="2.4" fill="#6D8FB5" opacity="0.75"/>
<rect x="1010.2" y="378.0" width="8" height="1.2" fill="#c8c8c8" opacity="0.6"/>
<rect x="841.3" y="310.1" width="1.6" height="10" fill="#7D9CC0" opacity="0.55"/>
<rect x="1031.5" y="310.1" width="1.6" height="10" fill="#7D9CC0" opacity="0.55"/>
<rect x="841.3" y="348.1" width="1.6" height="10" fill="#7D9CC0" opacity="0.55"/>
<rect x="1031.5" y="348.1" width="1.6" height="10" fill="#7D9CC0" opacity="0.55"/>
<rect x="847.8" y="385.6" width="179.2" height="73.4" fill="#fff" stroke="#2a2a2a" stroke-width="1.4"/>
<polygon points="877.7,433.7 883.1,431.7 888.8,427.6 893.3,422.8 895.3,419.1 901.4,417.5 906.7,415.1 913.2,413.0 921.3,412.6 926.3,411.4 931.4,410.0 937.5,409.4 942.6,407.0 946.6,397.8 951.7,391.7 959.8,389.1 972.0,389.1 981.1,390.3 990.2,387.9 997.3,389.9 997.1,394.8 991.3,401.3 992.7,411.0 990.6,418.1 982.1,423.6 973.0,429.7 968.3,435.4 964.3,439.8 961.0,445.9 960.2,456.0 949.7,456.9 931.4,456.0 923.3,454.8 915.2,453.6 907.1,451.2 900.0,447.9 893.9,444.7 889.2,441.4 885.8,442.7 880.3,442.7 878.1,439.0" fill="#FFFF00" stroke="#9a9a60" stroke-width="0.4"/>
<polygon points="877.7,433.7 883.1,431.7 888.8,427.6 893.3,422.8 895.3,419.1 901.4,417.5 905.5,416.7 910.7,421.6 913.6,425.6 915.6,429.3 910.1,430.5 903.0,432.5 896.9,434.5 891.3,436.6 887.6,439.8 885.8,442.7 880.3,442.7 878.1,439.0" fill="#F25A10" stroke="#a08050" stroke-width="0.3"/>
<polygon points="905.5,416.7 907.1,415.1 913.2,413.0 921.3,412.6 926.3,411.4 929.4,414.3 929.8,427.6 923.3,428.5 915.6,429.3 913.6,425.6 910.7,421.6" fill="#3FD61A" stroke="#70a050" stroke-width="0.3"/>
<polygon points="926.3,411.4 931.4,410.0 937.5,410.6 939.5,414.3 940.5,422.8 934.5,423.6 930.4,421.6 929.4,414.3" fill="#3FD61A" stroke="#70a050" stroke-width="0.3"/>
<polygon points="939.1,433.7 943.2,426.8 950.1,423.6 956.2,429.3 959.8,435.8 960.2,445.9 960.2,456.0 949.7,456.9 931.4,456.0 935.5,447.9 938.3,439.8" fill="#3FD61A" stroke="#70a050" stroke-width="0.3"/>
<polygon points="942.6,407.0 946.6,397.8 951.7,391.7 959.8,389.1 972.0,389.1 981.1,390.3 984.6,397.2 983.3,407.0 976.5,419.5 968.3,427.6 962.3,428.9 951.7,423.6 948.7,418.1 945.6,414.1" fill="#3FD61A" stroke="#70a050" stroke-width="0.3"/>
<polygon points="981.1,390.3 990.2,387.9 997.3,389.9 997.1,394.8 992.3,398.4 985.8,396.0" fill="#3FD61A" stroke="#70a050" stroke-width="0.3"/>
<polyline points="915.2,429.3 919.2,433.3 923.3,435.4 931.4,441.4 935.5,447.9" fill="none" stroke="#b0b070" stroke-width="0.4"/>
<polyline points="900.0,447.9 903.0,441.4 910.1,435.4 915.2,433.3" fill="none" stroke="#b0b070" stroke-width="0.4"/>
<polyline points="943.6,426.2 943.6,417.1 940.5,414.3" fill="none" stroke="#b0b070" stroke-width="0.4"/>
<polyline points="951.7,423.6 959.8,435.8" fill="none" stroke="#b0b070" stroke-width="0.4"/>
<polyline points="968.3,427.6 972.0,429.7" fill="none" stroke="#b0b070" stroke-width="0.4"/>
<polyline points="984.6,397.2 990.2,404.9 991.3,401.3" fill="none" stroke="#b0b070" stroke-width="0.4"/>
<text x="896.9" y="429.7" font-size="4" font-family="Liberation Serif" font-weight="bold" fill="#111" text-anchor="middle">Sub-6</text>
<text x="898.6" y="439.4" font-size="4" font-family="Liberation Serif" font-weight="bold" fill="#111" text-anchor="middle">Sub-5</text>
<text x="916.8" y="446.5" font-size="4" font-family="Liberation Serif" font-weight="bold" fill="#111" text-anchor="middle">Sub-4</text>
<text x="932.4" y="434.9" font-size="4" font-family="Liberation Serif" font-weight="bold" fill="#111" text-anchor="middle">Sub-10</text>
<text x="949.3" y="443.5" font-size="4" font-family="Liberation Serif" font-weight="bold" fill="#111" text-anchor="middle">Sub-3</text>
<text x="963.9" y="434.9" font-size="4" font-family="Liberation Serif" font-weight="bold" fill="#111" text-anchor="middle">Sub-2</text>
<text x="918.2" y="419.1" font-size="4" font-family="Liberation Serif" font-weight="bold" fill="#111" text-anchor="middle">Sub-7</text>
<text x="934.5" y="417.1" font-size="4" font-family="Liberation Serif" font-weight="bold" fill="#111" text-anchor="middle">Sub-8</text>
<text x="940.5" y="412.0" font-size="4" font-family="Liberation Serif" font-weight="bold" fill="#111" text-anchor="middle">Sub-9</text>
<text x="959.8" y="405.3" font-size="4" font-family="Liberation Serif" font-weight="bold" fill="#111" text-anchor="middle">Sub-11</text>
<text x="982.1" y="418.7" font-size="4" font-family="Liberation Serif" font-weight="bold" fill="#111" text-anchor="middle">Sub-1</text>
<text x="860.3" y="406.6" font-size="10" font-family="Liberation Serif" font-weight="bold" fill="#222">2042</text>
<path d="M1003.5415821501015,428.2525354969574 L1011.5415821501015,427.2525354969574 L1019.5415821501015,428.2525354969574 L1011.5415821501015,429.2525354969574 Z M1011.5415821501015,421.2525354969574 L1012.5415821501015,428.2525354969574 L1011.5415821501015,436.2525354969574 L1010.5415821501015,428.2525354969574 Z" fill="#222"/>
<text x="1010.5415821501015" y="419.2525354969574" font-size="3" font-family="Liberation Serif" fill="#222">N</text>
<rect x="985.1724137931035" y="451.1734279918864" width="32" height="1.6" fill="#222"/>
<text x="985.1724137931035" y="449.6734279918864" font-size="3.2" font-family="Liberation Serif" font-weight="bold" fill="#222">0.8 &#160; 1 &#160;2 &#160;3 &#160;4</text>
<text x="1018.1724137931035" y="453.1734279918864" font-size="2.5" font-family="Liberation Serif" fill="#222">Km</text>
<line x1="883.5" y1="385.6" x2="883.5" y2="383.1" stroke="#555" stroke-width="0.5"/>
<line x1="883.5" y1="459.0" x2="883.5" y2="461.5" stroke="#555" stroke-width="0.5"/>
<line x1="883.5" y1="388.6" x2="883.5" y2="385.6" stroke="#555" stroke-width="0.5"/>
<line x1="883.5" y1="456.0" x2="883.5" y2="459.0" stroke="#555" stroke-width="0.5"/>
<rect x="873.0" y="463.3" width="11" height="2.4" fill="#6D8FB5" opacity="0.75"/>
<rect x="884.5" y="462.8" width="8" height="1.2" fill="#c8c8c8" opacity="0.6"/>
<line x1="925.3" y1="385.6" x2="925.3" y2="383.1" stroke="#555" stroke-width="0.5"/>
<line x1="925.3" y1="459.0" x2="925.3" y2="461.5" stroke="#555" stroke-width="0.5"/>
<line x1="925.3" y1="388.6" x2="925.3" y2="385.6" stroke="#555" stroke-width="0.5"/>
<line x1="925.3" y1="456.0" x2="925.3" y2="459.0" stroke="#555" stroke-width="0.5"/>
<rect x="914.8" y="463.3" width="11" height="2.4" fill="#6D8FB5" opacity="0.75"/>
<rect x="926.3" y="462.8" width="8" height="1.2" fill="#c8c8c8" opacity="0.6"/>
<line x1="967.6" y1="385.6" x2="967.6" y2="383.1" stroke="#555" stroke-width="0.5"/>
<line x1="967.6" y1="459.0" x2="967.6" y2="461.5" stroke="#555" stroke-width="0.5"/>
<line x1="967.6" y1="388.6" x2="967.6" y2="385.6" stroke="#555" stroke-width="0.5"/>
<line x1="967.6" y1="456.0" x2="967.6" y2="459.0" stroke="#555" stroke-width="0.5"/>
<rect x="957.1" y="463.3" width="11" height="2.4" fill="#6D8FB5" opacity="0.75"/>
<rect x="968.6" y="462.8" width="8" height="1.2" fill="#c8c8c8" opacity="0.6"/>
<line x1="1009.2" y1="385.6" x2="1009.2" y2="383.1" stroke="#555" stroke-width="0.5"/>
<line x1="1009.2" y1="459.0" x2="1009.2" y2="461.5" stroke="#555" stroke-width="0.5"/>
<line x1="1009.2" y1="388.6" x2="1009.2" y2="385.6" stroke="#555" stroke-width="0.5"/>
<line x1="1009.2" y1="456.0" x2="1009.2" y2="459.0" stroke="#555" stroke-width="0.5"/>
<rect x="998.7" y="463.3" width="11" height="2.4" fill="#6D8FB5" opacity="0.75"/>
<rect x="1010.2" y="462.8" width="8" height="1.2" fill="#c8c8c8" opacity="0.6"/>
<rect x="841.3" y="399.6" width="1.6" height="10" fill="#7D9CC0" opacity="0.55"/>
<rect x="1032.0" y="399.6" width="1.6" height="10" fill="#7D9CC0" opacity="0.55"/>
<rect x="841.3" y="437.6" width="1.6" height="10" fill="#7D9CC0" opacity="0.55"/>
<rect x="1032.0" y="437.6" width="1.6" height="10" fill="#7D9CC0" opacity="0.55"/>
<rect x="848" y="468" width="179.6" height="48" fill="#fff" stroke="#2a2a2a" stroke-width="1.2"/>
<text x="947" y="480" font-size="7.4" font-family="Liberation Serif" font-weight="bold" fill="#333" text-anchor="middle" letter-spacing="0.35">Watershed health index Zoning</text>
<text x="855" y="482" font-size="6.5" font-family="Liberation Serif" font-weight="bold" fill="#222">Legend</text>
<rect x="855" y="491.3" width="4.5" height="3.5" fill="#3FD61A"/>
<text x="862" y="494.8" font-size="5.6" font-family="Liberation Serif" font-weight="bold" fill="#333">Moderately positive</text>
<rect x="855" y="498.40000000000003" width="4.5" height="3.5" fill="#FFFF00"/>
<text x="862" y="501.90000000000003" font-size="5.6" font-family="Liberation Serif" font-weight="bold" fill="#333">Moderately negative</text>
<rect x="855" y="505.5" width="4.5" height="3.5" fill="#F25A10"/>
<text x="862" y="509.0" font-size="5.6" font-family="Liberation Serif" font-weight="bold" fill="#333">Relatively unhealthy positive</text>
</svg>
<div class="a" style="left:0;top:406px;width:312px;height:209px;overflow:hidden;background:linear-gradient(180deg,#F3F4F0 0%,#E6EFDC 35%,#D2E5C0 70%,#C9DFB2 100%);box-shadow:inset 0 1px 0 #d8d8d8">
<div class="a" style="left:95.1px;top:24px;width:0.8px;height:21.600000000000023px;background:#9DB9D6"></div>
<div class="a" style="left:36px;top:45.200000000000024px;width:137px;height:0.8px;background:#9DB9D6"></div>
<div class="a" style="left:35.65px;top:45.60000000000002px;width:0.7px;height:2.8999999999999773px;background:#9DB9D6"></div>
<div class="a" style="left:71.65px;top:45.60000000000002px;width:0.7px;height:2.8999999999999773px;background:#9DB9D6"></div>
<div class="a" style="left:100.65px;top:45.60000000000002px;width:0.7px;height:2.8999999999999773px;background:#9DB9D6"></div>
<div class="a" style="left:132.65px;top:45.60000000000002px;width:0.7px;height:2.8999999999999773px;background:#9DB9D6"></div>
<div class="a" style="left:172.65px;top:45.60000000000002px;width:0.7px;height:2.8999999999999773px;background:#9DB9D6"></div>
<div class="a" style="left:135.1px;top:24px;width:0.8px;height:10.5px;background:#9DB9D6"></div>
<div class="a" style="left:135.5px;top:34.1px;width:25.5px;height:0.8px;background:#9DB9D6"></div>
<div class="a" style="left:97.65px;top:61px;width:0.7px;height:4px;background:#333"></div>
<div class="a" style="left:97.65px;top:87px;width:0.7px;height:7px;background:#333"></div>
<div class="a" style="left:96.65px;top:114px;width:0.7px;height:6px;background:#333"></div>
<div class="a" style="left:100.65px;top:140px;width:0.7px;height:27px;background:#333"></div>
<div class="a" style="left:142px;top:124.35px;width:69px;height:1.3px;background:#4472C4"></div>
<div class="a" style="left:101px;top:153.35px;width:108px;height:1.3px;background:#4472C4"></div>
<div class="a" style="left:114px;top:206.35px;width:72px;height:1.3px;background:#4472C4"></div>
<svg class="a" style="left:0;top:0" width="312" height="209"><rect x="211" y="20.5" width="99.5" height="169.5" rx="15" fill="none" stroke="#6C9ED6" stroke-width="1.4" stroke-dasharray="4.5 2.8"/><path d="M207,123 L212,125.5 L207,128 Z" fill="#4472C4"/></svg>
<div class="a" style="left:1.5px;top:14.600000000000012px;width:24.5px;height:11.699999999999989px;background:#4A8A2A;clip-path:polygon(0 0,19.5px 0,100% 50%,19.5px 100%,0 100%);"></div>
<div class="a" style="left:1.5px;top:13.800000000000011px;width:23.9px;height:10.899999999999988px;background:linear-gradient(#9BE05A,#7CCB43);clip-path:polygon(0 0,18.9px 0,100% 50%,18.9px 100%,0 100%);"></div>
<div class="a fb" style="left:2.5px;top:13.800000000000011px;width:19.5px;height:11.699999999999989px;font-size:6.2px;font-weight:normal;color:#234A12"><span>Step 1</span></div>
<div class="a" style="left:0px;top:92.10000000000001px;width:23.6px;height:11.399999999999977px;background:#14528E;clip-path:polygon(0 0,18.6px 0,100% 50%,18.6px 100%,0 100%);"></div>
<div class="a" style="left:0px;top:91.30000000000001px;width:23.0px;height:10.599999999999977px;background:#1F72C4;clip-path:polygon(0 0,18.0px 0,100% 50%,18.0px 100%,0 100%);"></div>
<div class="a fb" style="left:1px;top:91.30000000000001px;width:18.6px;height:11.399999999999977px;font-size:6.2px;font-weight:normal;color:#0A2A55"><span>Step 2</span></div>
<div class="a" style="left:0px;top:138.50000000000006px;width:25.2px;height:10.5px;background:#B8A800;clip-path:polygon(0 0,20.2px 0,100% 50%,20.2px 100%,0 100%);"></div>
<div class="a" style="left:0px;top:137.70000000000005px;width:24.599999999999998px;height:9.7px;background:#F8F200;clip-path:polygon(0 0,19.6px 0,100% 50%,19.6px 100%,0 100%);"></div>
<div class="a fb" style="left:1px;top:137.70000000000005px;width:20.2px;height:10.5px;font-size:6.2px;font-weight:normal;color:#3A3400"><span>Step 3</span></div>
<div class="a" style="left:0px;top:166.8px;width:27.6px;height:10.700000000000045px;background:#A00A0A;clip-path:polygon(0 0,22.6px 0,100% 50%,22.6px 100%,0 100%);"></div>
<div class="a" style="left:0px;top:166px;width:27.0px;height:9.900000000000045px;background:#F41414;clip-path:polygon(0 0,22.0px 0,100% 50%,22.0px 100%,0 100%);"></div>
<div class="a fb" style="left:1px;top:166px;width:22.6px;height:10.700000000000045px;font-size:6.2px;font-weight:normal;color:#5A0000"><span>Step 4</span></div>
<div class="a fb" style="left:46px;top:5px;width:99px;height:19px;background:linear-gradient(#FCE49A,#F5CB5C);border:0.5px solid #D9A93B;border-radius:2px;box-shadow:0.6px 0.8px 0.8px rgba(0,0,0,0.35);font-size:4.4px;color:#111;line-height:7px"><span>Collecting data and preparing basic maps<br>and digital layers</span></div>
<div class="a fb" style="left:161px;top:26px;width:32px;height:17px;background:#FBE5D6;border:1.5px solid #9CC0EA;border-radius:2px;box-shadow:0.6px 0.8px 0.8px rgba(0,0,0,0.35);font-size:3.3px;color:#111;line-height:5.3px"><span>Determining<br>work units</span></div>
<div class="a fb" style="left:23px;top:48.5px;width:25px;height:13.0px;background:#fff;border:0.5px solid #C9D9C0;border-radius:1.5px;font-size:3.4px;color:#111;line-height:5.2px;font-weight:normal;-webkit-text-stroke:0.15px #222"><span>land use</span></div>
<div class="a fb" style="left:55px;top:48.5px;width:25px;height:13.0px;background:#fff;border:0.5px solid #C9D9C0;border-radius:1.5px;font-size:3.4px;color:#111;line-height:5.2px;font-weight:normal;-webkit-text-stroke:0.15px #222"><span>weather<br>and climate</span></div>
<div class="a fb" style="left:84px;top:48.5px;width:26px;height:13.0px;background:#fff;border:0.5px solid #C9D9C0;border-radius:1.5px;font-size:3.4px;color:#111;line-height:5.2px;font-weight:normal;-webkit-text-stroke:0.15px #222"><span>Hydrology</span></div>
<div class="a fb" style="left:114px;top:48.5px;width:33.5px;height:13.0px;background:#fff;border:0.5px solid #C9D9C0;border-radius:1.5px;font-size:3.4px;color:#111;line-height:5.2px;font-weight:normal;-webkit-text-stroke:0.15px #222"><span>Geology and soil<br>science</span></div>
<div class="a fb" style="left:154px;top:48.5px;width:33px;height:13.0px;background:#fff;border:0.5px solid #C9D9C0;border-radius:1.5px;font-size:3.4px;color:#111;line-height:5.2px;font-weight:normal;-webkit-text-stroke:0.15px #222"><span>Physiography<br>and topography</span></div>
<div class="a fb" style="left:47px;top:65.5px;width:103px;height:21.5px;background:linear-gradient(#C6DBF2,#9DC3E6);border:0.6px solid #6A9BD1;border-radius:3px;box-shadow:0.6px 0.8px 0.8px rgba(0,0,0,0.35);font-size:4.8px;color:#111;line-height:8px"><span>Field visit to investigate problems and<br>estimate watershed characteristics</span></div>
<div class="a fb" style="left:47.5px;top:94px;width:102.0px;height:20.5px;background:linear-gradient(#D6E5F5,#A9CBEA);border:0.6px solid #6A9BD1;border-radius:3px;box-shadow:0.6px 0.8px 0.8px rgba(0,0,0,0.35);font-size:3.8px;color:#111;line-height:4.2px"><span>Information processing - model conceptualization<br><br>Selection of criteria</span></div>
<div class="a fb" style="left:64.5px;top:120px;width:76.5px;height:20.5px;background:linear-gradient(#6FA6E0,#4F90D2);border:0.6px solid #4A84C0;border-radius:3px;box-shadow:0.6px 0.8px 0.8px rgba(0,0,0,0.35);font-size:5.5px;color:#0B2040;line-height:8.5px"><span>Determination of dynamic<br>and static criteria</span></div>
<div class="a fb" style="left:87.3px;top:167px;width:27.10000000000001px;height:11.5px;background:#F8B99A;border:0.5px solid #E08B60;border-radius:1px;box-shadow:0.6px 0.8px 0.8px rgba(0,0,0,0.35);font-size:3.2px;color:#111;"><span>Normalization</span></div>
<div class="a fb" style="left:14px;top:174px;width:73.5px;height:26.5px;background:linear-gradient(#AFC0EE,#8EA6E0);border:0.6px solid #6D86C9;border-radius:3px;box-shadow:0.6px 0.8px 0.8px rgba(0,0,0,0.35);font-size:3.1px;color:#111;line-height:5.3px;align-items:flex-start;padding-top:3.3px"><span>Application of localized model of watershed<br>health (PSR)<div style="height:2.2px"></div>The first mode is based on primary static<br>and dynamic criteria</span></div>
<div class="a fb" style="left:114.4px;top:173.39999999999998px;width:83.0px;height:29.600000000000023px;background:linear-gradient(#AFC0EE,#8EA6E0);border:0.6px solid #6D86C9;border-radius:3px;box-shadow:0.6px 0.8px 0.8px rgba(0,0,0,0.35);font-size:3.1px;color:#111;line-height:5.3px;align-items:flex-start;padding-top:3px;overflow:visible"><span>Application of localized model of watershed<br>health (PSR)<div style="height:2.2px"></div>The second mode is based on static criteria and<br>possible dynamic scenarios (10 and 20 year<br>forecast)</span></div>
<div class="a fb" style="left:85px;top:197.70000000000005px;width:31.799999999999997px;height:21.299999999999955px;background:#F8B99A;border:0.5px solid #E08B60;border-radius:1px;box-shadow:0.6px 0.8px 0.8px rgba(0,0,0,0.35);font-size:3.2px;color:#111;"><span>Regression<br>analysis</span></div>
<div class="a fb" style="left:187.6px;top:198.29999999999995px;width:41.099999999999994px;height:20.700000000000045px;background:#F8B99A;border:0.5px solid #E08B60;border-radius:1px;box-shadow:0.6px 0.8px 0.8px rgba(0,0,0,0.35);font-size:3.4px;color:#111;"><span>Zoning and<br>classification and</span></div>
<div class="a fb" style="left:225px;top:29.80000000000001px;width:73.5px;height:20.599999999999966px;background:linear-gradient(#C9E3B8,#96C77F);border:0.6px solid #70A050;border-radius:3px;box-shadow:0.6px 0.8px 0.8px rgba(0,0,0,0.35);font-size:4.3px;color:#111;line-height:11.3px"><span>Check the dynamic criteria<br>Hydroclimatic and land use change</span></div>
<div class="a fb" style="left:213px;top:55.69999999999999px;width:46.5px;height:17.900000000000034px;background:linear-gradient(#8ED06A,#5CAE3A);border:0.5px solid #4E8F2E;border-radius:2px;box-shadow:0.6px 0.8px 0.8px rgba(0,0,0,0.35);font-size:3.0px;color:#111;line-height:4.4px"><span>Preparation and extraction<br>of land use maps for the<br>years 1375 1388 and 1400</span></div>
<div class="a fb" style="left:262.7px;top:54px;width:46.900000000000034px;height:27.69999999999999px;background:#C3E1F7;border:1px solid #5B9BD5;border-radius:4px;font-size:3.0px;color:#111;line-height:4.4px"><span>Collection of hydroclimatic<br>information<br><br>(temperature,<br>precipitation and<br>discharge)</span></div>
<div class="a fb" style="left:213px;top:83.39999999999998px;width:46.5px;height:17.900000000000034px;background:linear-gradient(#8ED06A,#5CAE3A);border:0.5px solid #4E8F2E;border-radius:2px;box-shadow:0.6px 0.8px 0.8px rgba(0,0,0,0.35);font-size:3.8px;color:#111;line-height:8px"><span>Processing maps and<br>Satellite images</span></div>
<div class="a fb" style="left:262.7px;top:85.19999999999999px;width:46.900000000000034px;height:24.500000000000057px;background:#C3E1F7;border:1px solid #5B9BD5;border-radius:4px;font-size:3.0px;color:#111;line-height:4.5px"><span>Statistical analysis of<br>hydroclimatic variables<br>(rainfall, temperature,<br>discharge)</span></div>
<div class="a fb" style="left:213.5px;top:111.5px;width:46.0px;height:36.700000000000045px;background:linear-gradient(#84CB60,#57A934);border:0.6px solid #4E8F2E;border-radius:4px;box-shadow:0.6px 0.8px 0.8px rgba(0,0,0,0.35);font-size:4.4px;color:#111;line-height:8.5px"><span>Check<br>land use change<br>10 and 20 year<br>forecast</span></div>
<div class="a fb" style="left:267px;top:118.70000000000005px;width:39.5px;height:20.5px;background:#C3E1F7;border:1px solid #5B9BD5;border-radius:3px;font-size:3.0px;color:#111;line-height:5px"><span>Examining time series<br>of variables<br><span style="line-height:7px">Time series modeling</span></span></div>
<div class="a fb" style="left:239px;top:160.70000000000005px;width:45.19999999999999px;height:25.59999999999991px;background:linear-gradient(#C9E3B8,#A9D18E);border:0.6px solid #70A050;border-radius:2px;box-shadow:0.6px 0.8px 0.8px rgba(0,0,0,0.35);font-size:3.1px;color:#111;line-height:4.8px"><span>Estimation and analysis of<br>dynamic criteria<br><span style="line-height:8px">forecast (10 and 20 years)</span></span></div>
</div>
<!-- Zoning pill -->
<div class="a" style="left:841px;top:151px;width:193px;height:46px;border:1px solid #a0a0a0;border-radius:9px;background:linear-gradient(#d6d6d6,#c0c0c0)"></div>
<div class="a nw" style="left:841px;top:151px;width:193px;text-align:center;font-size:18.5px;line-height:23.5px;color:#000"><span style="letter-spacing:0.3px">Watershed health</span><br>Zoning</div>

<!-- Financial -->
<div class="a gold" style="left:816px;top:516px;width:259px;height:86px"></div>
<div class="a nw" style="left:816px;top:521px;width:259px;text-align:center;color:#fff;font-weight:bold;font-size:15px;text-decoration:underline;line-height:18px;letter-spacing:0.15px">Financial Sources</div>
<div class="a nw" style="left:825px;top:550.5px;color:#fff;font-size:15px;line-height:17.4px"><span style="letter-spacing:-0.2px">This research was done with the</span><br>financial support of Tarbiat Modares<br>University</div>

</body></html>
